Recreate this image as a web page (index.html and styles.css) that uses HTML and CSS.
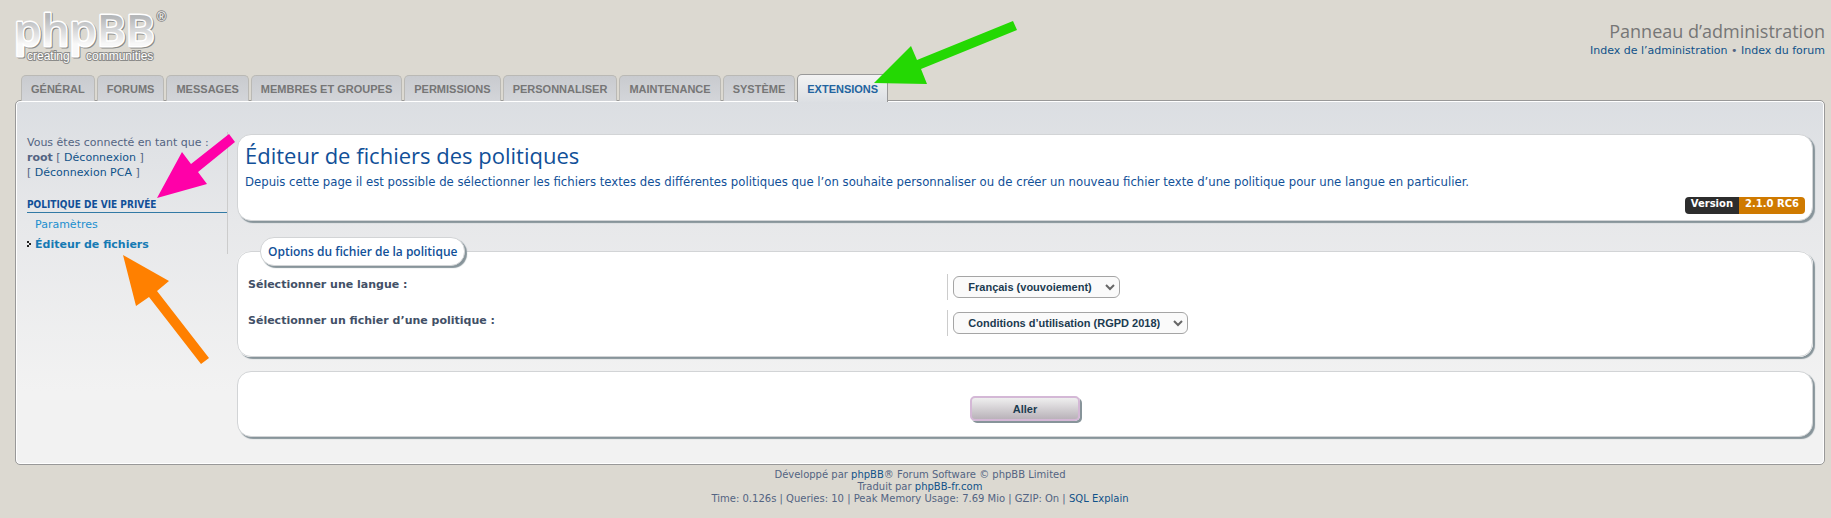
FILE: index.html
```html
<!DOCTYPE html>
<html lang="fr">
<head>
    <meta charset="UTF-8">
    <meta name="viewport" content="width=device-width, initial-scale=1.0">
    <title>Éditeur de fichiers des politiques</title>
    <link rel="stylesheet" href="styles.css">
</head>
<body>
    <div class="wrap">
        <header class="page-header">
            <a class="logo" href="#">
                <svg width="170" height="66" viewBox="0 0 170 66" role="img" aria-label="phpBB creating communities">
                    <defs>
                        <linearGradient id="logo-fill" x1="0" y1="0" x2="0" y2="1">
                            <stop offset="0.3" stop-color="#b5b7b9"/>
                            <stop offset="0.75" stop-color="#f8f8f8"/>
                        </linearGradient>
                    </defs>
                    <g class="logo-name">
                        <text class="logo-shade" x="0" y="39">phpBB</text>
                        <text class="logo-face" x="-1" y="38">phpBB</text>
                    </g>
                    <text class="logo-mark" x="142" y="13">®</text>
                    <text class="logo-tag" x="12" y="52">creating</text>
                    <text class="logo-tag" x="71" y="52">communities</text>
                </svg>
            </a>
            <div class="header-links">
                <h1>Panneau d’administration</h1>
                <p><a href="#">Index de l’administration</a> • <a href="#">Index du forum</a></p>
            </div>
        </header>

        <nav class="tabs">
            <a href="#">Général</a>
            <a href="#">Forums</a>
            <a href="#">Messages</a>
            <a href="#">Membres et groupes</a>
            <a href="#">Permissions</a>
            <a href="#">Personnaliser</a>
            <a href="#">Maintenance</a>
            <a href="#">Système</a>
            <a class="active" href="#">Extensions</a>
        </nav>

        <div class="panel">
            <aside class="menu">
                <p>Vous êtes connecté en tant que :<br><strong>root</strong> [ <a href="#">Déconnexion</a> ]<br>[ <a href="#">Déconnexion PCA</a> ]</p>
                <h2>Politique de vie privée</h2>
                <ul>
                    <li><a href="#">Paramètres</a></li>
                    <li class="active">
                        <svg width="5" height="6" viewBox="0 0 5 6"><path d="M0 0h2v2h-2zM2 2h2v2h-2zM0 4h2v2h-2z" fill="#222"/></svg>
                        <a href="#">Éditeur de fichiers</a>
                    </li>
                </ul>
            </aside>

            <main class="main">
                <section class="box intro">
                    <h2>Éditeur de fichiers des politiques</h2>
                    <p>Depuis cette page il est possible de sélectionner les fichiers textes des différentes politiques que l’on souhaite personnaliser ou de créer un nouveau fichier texte d’une politique pour une langue en particulier.</p>
                    <div class="version"><span>Version</span><span class="number">2.1.0 RC6</span></div>
                </section>

                <form>
                    <fieldset class="box options">
                        <legend>Options du fichier de la politique</legend>
                        <div class="row">
                            <label for="lang">Sélectionner une langue :</label>
                            <div class="field">
                                <select id="lang">
                                    <option>Français (vouvoiement)</option>
                                </select>
                            </div>
                        </div>
                        <div class="row">
                            <label for="file">Sélectionner un fichier d’une politique :</label>
                            <div class="field">
                                <select id="file">
                                    <option>Conditions d’utilisation (RGPD 2018)</option>
                                </select>
                            </div>
                        </div>
                    </fieldset>
                    <div class="box submit">
                        <button type="button">Aller</button>
                    </div>
                </form>
            </main>
        </div>

        <footer class="page-footer">
            Développé par <a href="#">phpBB</a>® Forum Software © phpBB Limited<br>
            Traduit par <a href="#">phpBB-fr.com</a><br>
            Time: 0.126s | Queries: 10 | Peak Memory Usage: 7.69 Mio | GZIP: On | <a href="#">SQL Explain</a>
        </footer>
    </div>

    <svg class="arrows" width="1020" height="370" viewBox="0 0 1020 370" aria-hidden="true">
        <path fill="#24d803" d="M874 83L911 46L917 60L1013 21L1017 30L921 69L927 84Z"/>
        <path fill="#ff00a8" d="M157 198L182 152L191 164L229 134L235 142L198 172L207 184Z"/>
        <path fill="#ff8000" d="M123 255L169 281L157 291L209 358L201 364L149 297L136 306Z"/>
    </svg>
</body>
</html>
```

FILE: styles.css
```css
*{
    box-sizing: border-box;
}
body{
    margin: 0;
    background-color: #dcd9d1;
    color: #536482;
    font-family: Verdana, "DejaVu Sans", sans-serif;
    font-size: 11px;
    line-height: 15px;
}
a{
    color: #105289;
    text-decoration: none;
}
h1, h2, p, ul{
    margin: 0;
    padding: 0;
    font-weight: 400;
}
.wrap{
    padding: 0 6px 0 15px;
}

/* header */
.page-header{
    display: flex;
    justify-content: space-between;
    height: 75px;
    padding-top: 8px;
}
.logo svg{
    overflow: visible;
}
.logo-name{
    font-family: "Open Sans", sans-serif;
    font-size: 44px;
    font-weight: 600;
}
.logo-shade{
    fill: #8b8b89;
    stroke: #8b8b89;
    stroke-width: 3px;
    stroke-linejoin: round;
}
.logo-face{
    fill: url(#logo-fill);
    stroke: #fff;
    stroke-width: 3px;
    stroke-linejoin: round;
    paint-order: stroke;
}
.logo-tag, .logo-mark{
    font-family: "Liberation Sans", Arial, sans-serif;
    font-size: 12px;
    fill: #fff;
    stroke: #8b8b89;
    stroke-width: 2px;
    paint-order: stroke;
}
.header-links{
    padding-top: 12px;
    text-align: right;
}
.header-links h1{
    color: #767676;
    font-family: "Open Sans", sans-serif;
    font-size: 18px;
    line-height: 23px;
}

/* tabs */
.tabs{
    display: flex;
    gap: 2px;
    padding-left: 6px;
    font-family: "Liberation Sans", Arial, sans-serif;
    font-weight: 700;
    text-transform: uppercase;
}
.tabs a{
    height: 26px;
    padding: 6px 9px 0;
    border: 1px solid #bab9b5;
    border-bottom: 0;
    border-radius: 5px 5px 0 0;
    background: linear-gradient(#c9cbcf, #d3d5d9);
    color: #767676;
}
.tabs .active{
    height: 28px;
    margin: -1px 0 -1px;
    padding-top: 7px;
    border-color: #999;
    background: linear-gradient(#f3f3f3, #dcdfe3);
    color: #23649f;
    z-index: 1;
}

/* panel */
.panel{
    display: flex;
    margin-top: -1px;
    padding: 31px 8px 24px 11px;
    border: 1px solid #999;
    border-radius: 5px;
    box-shadow: inset 0 0 0 1px #fff;
    background: linear-gradient(#dbdee2, #e7e8ea 120px, #f2f2f2 290px);
}
.menu{
    flex: none;
    width: 201px;
    height: 122px;
    border-right: 1px solid #ccc;
}
.menu p{
    padding-top: 3px;
}
.menu h2{
    margin-top: 17px;
    border-bottom: 1px solid #327aa5;
    color: #115098;
    font-family: Tahoma, "DejaVu Sans Condensed", sans-serif;
    font-size: 10px;
    font-weight: 700;
    text-transform: uppercase;
}
.menu ul{
    padding-top: 1px;
    list-style: none;
}
.menu li{
    display: flex;
    align-items: center;
    height: 20px;
    padding-left: 8px;
}
.menu li a{
    color: #1b8fcf;
}
.menu .active{
    gap: 3px;
    padding-left: 0;
    font-weight: 700;
}
.menu .active a{
    color: #157ab4;
}
.main{
    flex: 1;
    padding: 2px 3px 3px 9px;
}

/* boxes */
.box{
    border: 1px solid #d2d4d6;
    border-radius: 14px;
    background-color: #fff;
    box-shadow: 2px 2px 1px #87949a;
}
.intro{
    height: 87px;
    padding: 8px 7px 0;
    color: #115098;
}
.intro h2{
    font-family: "Open Sans", sans-serif;
    font-size: 22px;
    line-height: 24px;
}
.intro p{
    padding: 7px 0 8px;
    font-family: Tahoma, "DejaVu Sans Condensed", sans-serif;
    font-size: 13px;
}
.version{
    display: flex;
    justify-content: flex-end;
    color: #fff;
    font-size: 10px;
    font-weight: 700;
    line-height: 14px;
}
.version span{
    height: 17px;
    padding: 0 6px;
    border-radius: 4px 0 0 4px;
    background-color: #2d2d2d;
}
.version .number{
    border-radius: 0 4px 4px 0;
    background-color: #cf7a00;
}
.options{
    margin: 16px 0 14px;
    padding: 8px 10px 10px;
}
.options legend{
    margin-left: 12px;
    padding: 6px 7px;
    border: 1px solid #d2d4d6;
    border-radius: 14px;
    background-color: #fff;
    box-shadow: 2px 2px 1px #87949a;
    color: #115098;
    font-family: "Open Sans", sans-serif;
    font-size: 12px;
    font-weight: 600;
}
.row{
    display: flex;
    margin-bottom: 10px;
    color: #425067;
}
.row label{
    width: 45%;
    padding-top: 3px;
    font-weight: 700;
}
.field{
    height: 26px;
    padding: 2px 5px;
    border-left: 1px solid #ccc;
}
select, button{
    color: #1c3b50;
    font-family: "Liberation Sans", Arial, sans-serif;
    font-size: 11px;
    font-weight: 700;
}
select{
    height: 22px;
    padding: 0 27px 0 14px;
    border: 1px solid #a5a5a5;
    border-radius: 6px;
    appearance: none;
    background: #fafafa url("data:image/svg+xml,%3Csvg xmlns='http://www.w3.org/2000/svg' width='10' height='7'%3E%3Cpath d='M1 1l4 4l4-4' fill='none' stroke='%23666' stroke-width='2'/%3E%3C/svg%3E") no-repeat right 4px center;
}
.submit{
    padding: 24px 0 15px;
    text-align: center;
}
button{
    display: block;
    width: 110px;
    height: 25px;
    margin: 0 auto;
    border: 2px solid #d4b8d6;
    border-radius: 5px;
    background: linear-gradient(#efefef, #b9b2b9);
    box-shadow: 2px 2px 0 #87949a;
}

/* footer */
.page-footer{
    padding-top: 4px;
    font-size: 10px;
    line-height: 12px;
    text-align: center;
}

.arrows{
    position: absolute;
    top: 0;
    left: 0;
    pointer-events: none;
    z-index: 2;
}
```
